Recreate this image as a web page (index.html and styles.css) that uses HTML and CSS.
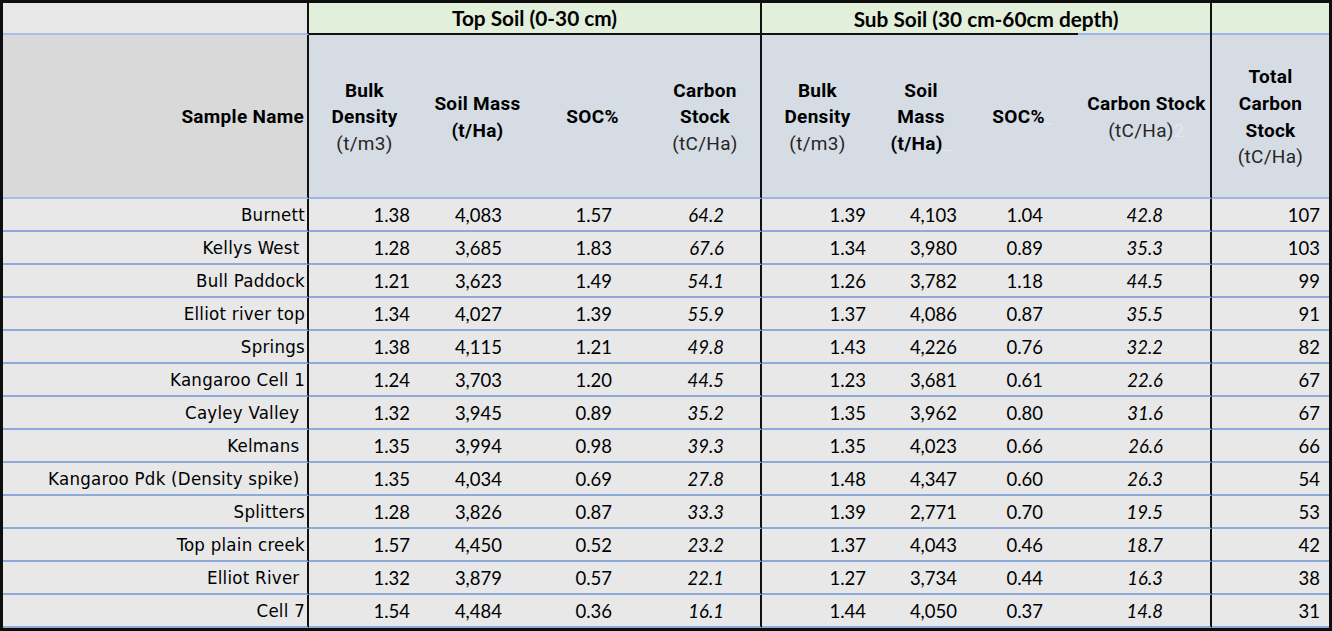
FILE: index.html
```html
<!DOCTYPE html>
<html>
<head>
<meta charset="utf-8">
<link rel="stylesheet" href="styles.css">
</head>
<body>
<div class="sheet">
  <div class="hrow1">
    <div class="h1 h1-name"></div>
    <div class="h1 h1-top">Top Soil (0-30 cm)</div>
    <div class="h1 h1-sub">Sub Soil (30 cm-60cm depth)</div>
    <div class="h1 h1-tot"></div>
  </div>
  <div class="grid hrow2">
    <div class="h2 h2-name gend"><span class="b">Sample Name</span></div>
    <div class="h2"><span class="b">Bulk<br>Density</span><span class="u">(t/m3)</span></div>
    <div class="h2"><span class="b">Soil Mass<br>(t/Ha)</span></div>
    <div class="h2"><span class="b">SOC%</span></div>
    <div class="h2 gend"><span class="b">Carbon<br>Stock</span><span class="u">(tC/Ha)</span></div>
    <div class="h2"><span class="b">Bulk<br>Density</span><span class="u">(t/m3)</span></div>
    <div class="h2"><span class="b">Soil<br>Mass<br>(t/Ha)<span class="faint">_</span></span></div>
    <div class="h2"><span class="b">SOC%<span class="faint">_</span></span></div>
    <div class="h2 gend h2-cs"><span class="b">Carbon Stock</span><span class="u">(tC/Ha)<span class="faint">2</span></span></div>
    <div class="h2"><span class="b">Total<br>Carbon<br>Stock</span><span class="u">(tC/Ha)</span></div>
  </div>
  <div id="rows"></div>
</div>
<script src="app.js"></script>
</body>
</html>
```
FILE: app.js
```js
const data = [
  ["Burnett","1.38","4,083","1.57","64.2","1.39","4,103","1.04","42.8","107"],
  ["Kellys West ","1.28","3,685","1.83","67.6","1.34","3,980","0.89","35.3","103"],
  ["Bull Paddock","1.21","3,623","1.49","54.1","1.26","3,782","1.18","44.5","99"],
  ["Elliot river top","1.34","4,027","1.39","55.9","1.37","4,086","0.87","35.5","91"],
  ["Springs","1.38","4,115","1.21","49.8","1.43","4,226","0.76","32.2","82"],
  ["Kangaroo Cell 1","1.24","3,703","1.20","44.5","1.23","3,681","0.61","22.6","67"],
  ["Cayley Valley ","1.32","3,945","0.89","35.2","1.35","3,962","0.80","31.6","67"],
  ["Kelmans ","1.35","3,994","0.98","39.3","1.35","4,023","0.66","26.6","66"],
  ["Kangaroo Pdk (Density spike) ","1.35","4,034","0.69","27.8","1.48","4,347","0.60","26.3","54"],
  ["Splitters","1.28","3,826","0.87","33.3","1.39","2,771","0.70","19.5","53"],
  ["Top plain creek","1.57","4,450","0.52","23.2","1.37","4,043","0.46","18.7","42"],
  ["Elliot River ","1.32","3,879","0.57","22.1","1.27","3,734","0.44","16.3","38"],
  ["Cell 7","1.54","4,484","0.36","16.1","1.44","4,050","0.37","14.8","31"]
];
const cls = ["name gend","n tbd","n tsm","n tsoc","n tcs it gend","n sbd","n ssm","n ssoc","n scs it gend","n tot"];
const host = document.getElementById("rows");
data.forEach(r => {
  const row = document.createElement("div");
  row.className = "grid drow";
  r.forEach((v, i) => {
    const c = document.createElement("div");
    c.className = "cell " + cls[i];
    c.textContent = v;
    row.appendChild(c);
  });
  host.appendChild(row);
});
```
FILE: styles.css
```css
html, body { margin: 0; padding: 0; background: #ffffff; }
.sheet {
  width: 1332px;
  height: 631px;
  box-sizing: border-box;
  border: 3px solid #0e0e0e;
  background: #e8e8e8;
  overflow: hidden;
}
.hrow1 {
  display: grid;
  grid-template-columns: 306px 453px 450px 117px;
  height: 32px;
}
.h1 {
  box-sizing: border-box;
  height: 32px;
  display: flex;
  align-items: center;
  justify-content: center;
  font-family: Lato, "Open Sans", sans-serif;
  font-weight: 700;
  font-size: 20.8px;
  color: #000;
  padding-bottom: 1px;
}
.h1-name { background: #e7e7e7; border-bottom: 2px solid #a7bee9; border-right: 2px solid #111; }
.h1-top { background: #e2efda; border-bottom: 2px solid #111; border-right: 2px solid #111; }
.h1-sub {
  border-right: 2px solid #111;
  background:
    linear-gradient(#111, #111) 0 100% / 316px 2px no-repeat,
    linear-gradient(#9db6e6, #9db6e6) 0 100% / 100% 2px no-repeat,
    #e2efda;
}
.h1-tot { background: #e2efda; border-bottom: 2px solid #9db6e6; }

.grid {
  display: grid;
  grid-template-columns: 306px 111px 115px 115px 112px 111px 96px 108px 135px 117px;
}
.gend { border-right: 2px solid #111; }

.hrow2 { height: 164px; }
.h2 {
  box-sizing: border-box;
  height: 164px;
  background: #d6dce4;
  border-bottom: 2px solid #9db6e6;
  display: flex;
  flex-direction: column;
  align-items: center;
  justify-content: center;
  text-align: center;
  font-family: Roboto, "Liberation Sans", sans-serif;
  font-size: 19px;
  line-height: 26.6px;
  letter-spacing: 0.3px;
  color: #000;
  padding-top: 3px;
}
.h2-name {
  background: #d9d9d9;
  align-items: flex-end;
  padding-right: 3px;
  border-bottom-color: #a7bee9;
}
.h2-cs { padding-left: 6px; }
.h2 .b { font-weight: 700; }
.h2 .u { font-weight: 400; color: #262626; }
.faint { color: #e3e7ed; font-weight: 400; }

.drow { height: 33px; }
.cell {
  box-sizing: border-box;
  height: 33px;
  border-bottom: 2px solid #8eaadb;
  background: #e8e8e8;
  display: flex;
  align-items: center;
  justify-content: flex-end;
  color: #000;
  white-space: pre;
}
.name {
  font-family: "DejaVu Sans Condensed", "Liberation Sans", sans-serif;
  font-size: 18.5px;
  letter-spacing: 0.25px;
  padding-right: 2px;
}
.n {
  font-family: Lato, "Open Sans", sans-serif;
  font-size: 18.5px;
}
.it { font-style: italic; }
.tbd { padding-right: 10px; }
.tsm { padding-right: 33px; }
.tsoc { padding-right: 38px; }
.tcs { padding-right: 36px; }
.sbd { padding-right: 7px; }
.ssm { padding-right: 12px; }
.ssoc { padding-right: 34px; }
.scs { padding-right: 47px; }
.tot { padding-right: 9px; }
```
